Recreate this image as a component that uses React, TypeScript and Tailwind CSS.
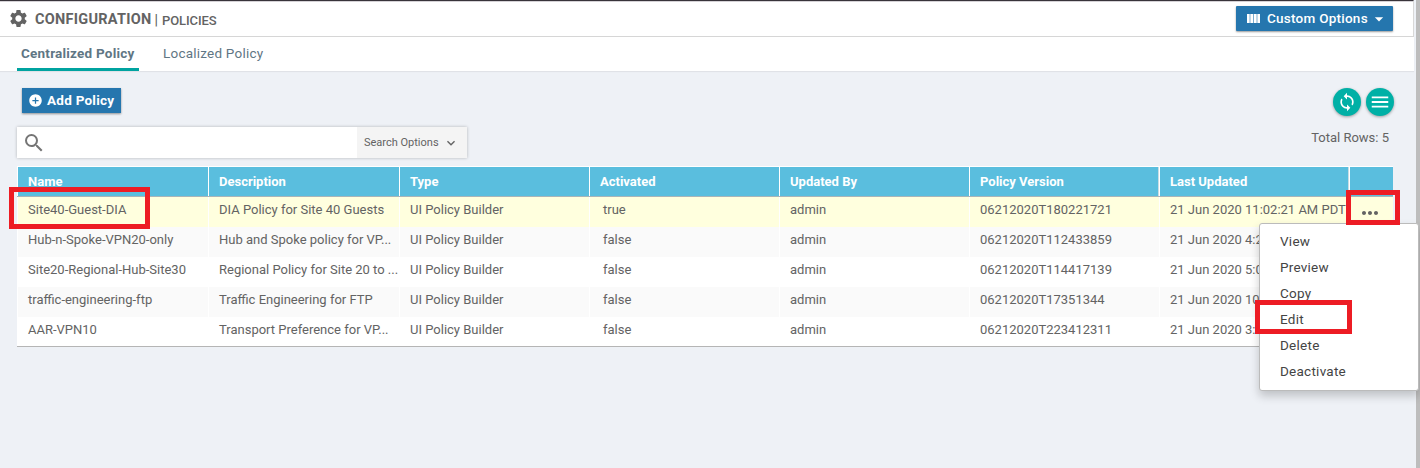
import { MdSettings, MdAddCircle, MdArrowDropDown, MdLoop, MdMenu, MdSearch, MdKeyboardArrowDown, MdMoreHoriz } from 'react-icons/md';

const headers = ['Name', 'Description', 'Type', 'Activated', 'Updated By', 'Policy Version', 'Last Updated', ''];

const rows = [
  ['Site40-Guest-DIA', 'DIA Policy for Site 40 Guests', 'UI Policy Builder', 'true', 'admin', '06212020T180221721', '21 Jun 2020 11:02:21 AM PDT'],
  ['Hub-n-Spoke-VPN20-only', 'Hub and Spoke policy for VP...', 'UI Policy Builder', 'false', 'admin', '06212020T112433859', '21 Jun 2020 4:24'],
  ['Site20-Regional-Hub-Site30', 'Regional Policy for Site 20 to ...', 'UI Policy Builder', 'false', 'admin', '06212020T114417139', '21 Jun 2020 5:04'],
  ['traffic-engineering-ftp', 'Traffic Engineering for FTP', 'UI Policy Builder', 'false', 'admin', '06212020T17351344', '21 Jun 2020 10:'],
  ['AAR-VPN10', 'Transport Preference for VP...', 'UI Policy Builder', 'false', 'admin', '06212020T223412311', '21 Jun 2020 3:4'],
];

const menu = ['View', 'Preview', 'Copy', 'Edit', 'Delete', 'Deactivate'];

const grid = 'grid grid-cols-[191px_191px_190px_190px_190px_190px_190px_44px]';

function ColumnsIcon() {
  return (
    <svg width="13" height="9" viewBox="0 0 13 9" fill="currentColor">
      <path d="M0 0h2.7v9H0zM3.3 0h2.9v9H3.3zM6.8 0h2.9v9H6.8zM10.3 0H13v9h-2.7z" />
    </svg>
  );
}

export default function App() {
  return (
    <div className="relative flex h-[468px] w-[1420px] overflow-hidden bg-[#eef1f6] font-['Roboto',sans-serif] text-[13px] text-[#636363]">
      <div className="flex w-[1414px] flex-col">
        <header className="flex h-[37px] items-center justify-between border-t border-r border-b border-t-[#38333a] border-r-[#d8d8d8] border-b-[#d6d6d6] bg-white pr-[20px] pl-2 shadow-[inset_0_1px_0_#d5d2d6]">
          <div className="flex items-center whitespace-nowrap">
            <MdSettings className="size-[21px]" />
            <span className="mt-[3px] ml-[6px] text-[14.5px] leading-5 font-bold tracking-[0.27px]">CONFIGURATION</span>
            <span className="mt-[2px] ml-[3px] text-[14px] leading-5 font-medium">|</span>
            <span className="mt-[4px] ml-1 text-[13px] leading-5 font-medium tracking-[-0.1px]">POLICIES</span>
          </div>
          <button className="flex h-[25px] w-[157px] items-center rounded-[1px] bg-[#2576ae] pl-[11px] text-[13.5px] font-medium whitespace-nowrap text-white shadow-[0_1px_2px_rgba(0,0,0,0.4)]">
            <ColumnsIcon />
            <span className="ml-[7px] tracking-[0.25px]">Custom Options</span>
            <MdArrowDropDown className="ml-px size-5" />
          </button>
        </header>
        <nav className="flex h-[34px] bg-white pl-[17px] text-[13.5px] text-[#5f7684] shadow-[0_1px_1px_rgba(0,0,0,0.06)]">
          <div className="h-[34px] w-[122px] border-b-3 border-[#00a3a0] pt-[6px] pl-1 leading-5 font-bold tracking-[0.22px] whitespace-nowrap">Centralized Policy</div>
          <div className="pt-[6px] pl-6 leading-5 tracking-[0.22px] whitespace-nowrap">Localized Policy</div>
        </nav>
        <main className="flex flex-col pt-[17px] pl-[17px]">
          <div className="flex h-[39px] items-start justify-between pr-[20px] pl-[5px]">
            <button className="flex h-[25px] w-[99px] items-center bg-[#2576ae] pl-[6px] text-[13.5px] font-bold tracking-[0.25px] whitespace-nowrap text-white shadow-[0_1px_2px_rgba(0,0,0,0.4)]">
              <MdAddCircle className="size-[15px]" />
              <span className="ml-1">Add Policy</span>
            </button>
            <div className="flex gap-[5px] text-white">
              <div className="flex size-7 items-center justify-center rounded-full bg-[#00b0a6] shadow-[0_1px_3px_rgba(0,0,0,0.35)]"><MdLoop className="size-5" /></div>
              <div className="flex size-7 items-center justify-center rounded-full bg-[#00b0a6] shadow-[0_1px_3px_rgba(0,0,0,0.35)]"><MdMenu className="size-[22px]" /></div>
            </div>
          </div>
          <div className="flex h-[39px] items-start justify-between pr-[25px]">
            <div className="flex h-[31px] w-[450px] bg-white shadow-[0_0_3px_rgba(0,0,0,0.25)]">
              <div className="flex w-[340px] items-center pl-[5px]"><MdSearch className="size-[24px] text-[#757575]" /></div>
              <div className="flex w-[110px] items-center bg-[#f4f4f4] pl-[7px] text-[11px] whitespace-nowrap">
                <span className="mt-px">Search Options</span><MdKeyboardArrowDown className="ml-1 size-4" />
              </div>
            </div>
            <span className="mt-px leading-5">Total Rows: 5</span>
          </div>
          <div className="w-[1376px]">
            <div className={`${grid} h-[31px] border-t border-b border-t-white border-b-[#a9b5b9] bg-[#5abede] font-bold text-white`}>
              {headers.map((h, i) => (
                <div key={i} className={`border-l border-white pl-[10px] leading-[29px] whitespace-nowrap ${i >= 6 ? 'shadow-[-1px_0_0_#c9dde4]' : ''}`}>{h}</div>
              ))}
            </div>
            {rows.map((row, r) => (
              <div key={r} className={`${grid} h-[30px] ${r === 0 ? 'bg-[#ffffde]' : r % 2 ? 'bg-[#fafafa]' : 'bg-white'} ${r === 4 ? 'border-b border-[#b5b5b5]' : ''}`}>
                {row.map((c, i) => (
                  <div key={i} className={`border-l border-white leading-[26px] whitespace-nowrap ${i === 3 ? 'pl-[13px]' : 'pl-[10px]'}`}>{c}</div>
                ))}
                <div className="flex items-center pt-[2px] pl-[9px]">{r === 0 && <MdMoreHoriz className="size-6 shrink-0" />}</div>
              </div>
            ))}
          </div>
        </main>
      </div>
      <div className="ml-[2px] w-1 bg-[#bdbdbd]" />
      <div className="absolute top-[223px] left-[1259px] flex h-[168px] w-[160px] flex-col rounded-[3px] border border-[#bbb] bg-white pt-[4px] pl-5 shadow-[0_5px_10px_rgba(0,0,0,0.2)]">
        {menu.map((m) => (
          <div key={m} className="h-[26px] text-[13.5px] leading-[27px] tracking-[0.25px] text-[#444]">{m}</div>
        ))}
      </div>
      <div className="absolute top-[187px] left-[9px] h-[42px] w-[141px] border-5 border-[#ed1c24]" />
      <div className="absolute top-[190px] left-[1346px] h-[35px] w-[54px] border-5 border-[#ed1c24]" />
      <div className="absolute top-[300px] left-[1255px] h-[34px] w-[97px] border-5 border-[#ed1c24]" />
    </div>
  );
}
